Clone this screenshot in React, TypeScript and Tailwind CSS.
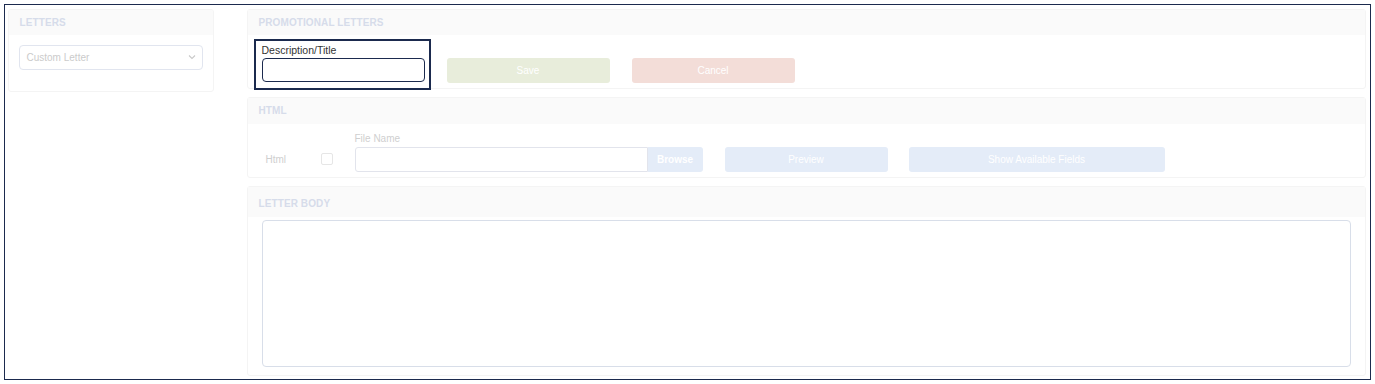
import React from "react";

function CardHeader({ title, h, extra = "" }: { title: string; h: string; extra?: string }) {
  return (
    <div className={`${h} ${extra} bg-[#fafafa] flex items-center px-[11px] text-[10px] font-bold tracking-[0.1px] text-[#d6dcea]`}>
      {title}
    </div>
  );
}

export default function App() {
  return (
    <div className="w-[1375px] h-[384px] bg-white pl-[4px] pt-[4px]" style={{ fontFamily: '"Liberation Sans", Arial, sans-serif' }}>
      <div className="w-[1367px] h-[376px] border-[1.5px] border-[#1b2a4e] flex pl-[2.5px] pt-[3.5px]">
        {/* Left column */}
        <div className="w-[206px] h-[83px] rounded-[3px] border border-[#f4f4f4] bg-white flex flex-col overflow-hidden">
          <CardHeader title="LETTERS" h="h-[25px]" />
          <div className="px-[10px] pt-[10px]">
            <div className="h-[25px] rounded-[4px] border border-[#e1e5ef] flex items-center justify-between pl-[7px] pr-[6px] text-[10px] text-[#cbcbcb]">
              <span>Custom Letter</span>
              <svg width="8" height="6" viewBox="0 0 8 6" fill="none">
                <path d="M1 1.5 L4 4.5 L7 1.5" stroke="#c9c9c9" strokeWidth="1.1" />
              </svg>
            </div>
          </div>
        </div>

        {/* Right column */}
        <div className="ml-[33px] w-[1119px] flex flex-col gap-[8px]">
          {/* Promotional letters */}
          <div className="h-[80px] rounded-[3px] border border-[#f4f4f4] bg-white flex flex-col relative">
            <CardHeader title="PROMOTIONAL LETTERS" h="h-[25px]" />
            <div className="flex items-start pl-[14px] pt-[9px]">
              <div className="relative w-[163px]">
                <div className="text-[10.5px] text-[#333] leading-[12px] h-[13px]">Description/Title</div>
                <div className="mt-[1px] h-[24px] rounded-[4px] border border-[#1b2a4e] bg-white" />
                <div className="absolute left-[-8px] top-[-5px] w-[177px] h-[51px] border-2 border-[#1b2a4e]" />
              </div>
              <div className="ml-[22px] mt-[14px] w-[163px] h-[25px] rounded-[3px] bg-[#e8eddb] text-white text-[10px] flex items-center justify-center">Save</div>
              <div className="ml-[22px] mt-[14px] w-[163px] h-[25px] rounded-[3px] bg-[#f3ddd8] text-white text-[10px] flex items-center justify-center">Cancel</div>
            </div>
          </div>

          {/* HTML */}
          <div className="h-[81px] rounded-[3px] border border-[#f4f4f4] bg-white flex flex-col">
            <CardHeader title="HTML" h="h-[26px]" />
            <div className="flex items-end pl-[18px] pt-[9px]">
              <div className="w-[55px] h-[25px] flex items-center text-[10px] text-[#cfcfcf]">Html</div>
              <div className="h-[25px] flex items-center">
                <div className="w-[12px] h-[12px] rounded-[2px] border border-[#e6e6e6] bg-white" />
              </div>
              <div className="ml-[22px] flex flex-col">
                <div className="text-[10px] text-[#cfcfcf] leading-[12px] h-[13px]">File Name</div>
                <div className="mt-[1px] flex">
                  <div className="w-[293px] h-[25px] rounded-l-[3px] border border-[#e2e4ec] bg-white" />
                  <div className="w-[55px] h-[25px] rounded-r-[3px] bg-[#e4ecf8] text-white text-[10px] font-bold flex items-center justify-center">Browse</div>
                </div>
              </div>
              <div className="ml-[22px] w-[163px] h-[25px] rounded-[3px] bg-[#e4ecf8] text-white text-[10px] flex items-center justify-center">Preview</div>
              <div className="ml-[21px] w-[256px] h-[25px] rounded-[3px] bg-[#e4ecf8] text-white text-[10px] flex items-center justify-center">Show Available Fields</div>
            </div>
          </div>

          {/* Letter body */}
          <div className="h-[190px] rounded-[3px] border border-[#f4f4f4] bg-white flex flex-col">
            <CardHeader title="LETTER BODY" h="h-[30px]" extra="pt-[3px]" />
            <div className="pl-[14px] pr-[14px] pt-[3px]">
              <div className="h-[147px] rounded-[4px] border border-[#d8dee9] bg-white" />
            </div>
          </div>
        </div>
      </div>
    </div>
  );
}
